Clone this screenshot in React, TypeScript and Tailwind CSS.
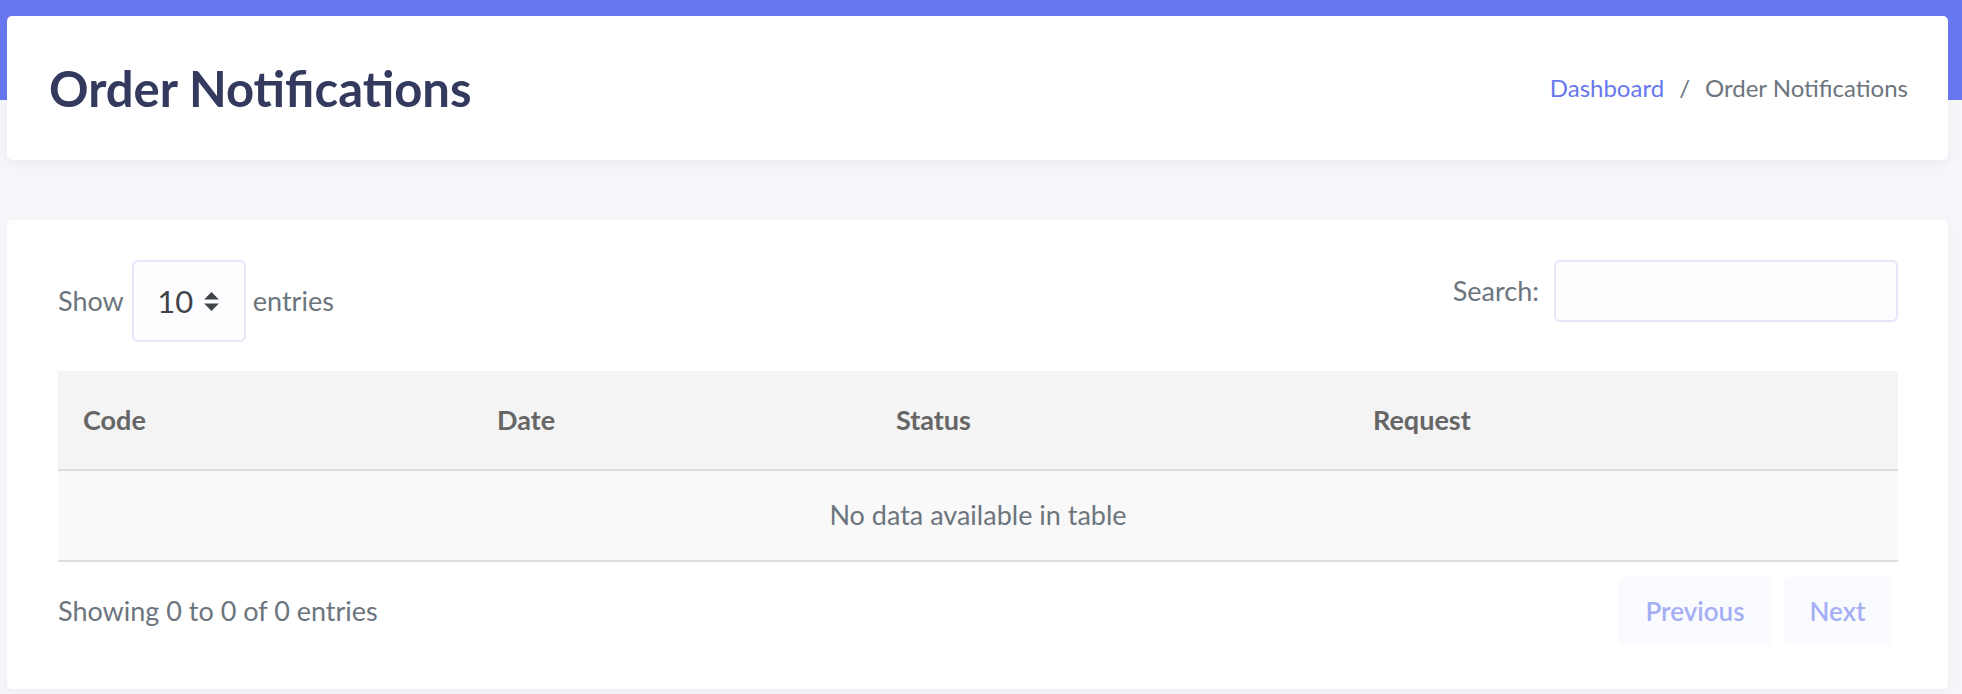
import React from 'react';

// Order notifications page — header card with breadcrumb, then an empty datatable.

const COLUMNS: { label: string; width: string }[] = [
  { label: 'Code', width: 'w-[414px]' },
  { label: 'Date', width: 'w-[399px]' },
  { label: 'Status', width: 'w-[477px]' },
  { label: 'Request', width: 'w-auto' },
];

const SortArrows: React.FC = () => (
  <svg width="17" height="21" viewBox="0 0 16 20" className="text-[#3f444a]" aria-hidden>
    <path d="M8 1 L15 8 H1 Z" fill="currentColor" />
    <path d="M1 12 H15 L8 19 Z" fill="currentColor" />
  </svg>
);

export default function App() {
  return (
    <div
      className="min-h-screen bg-[linear-gradient(#6777ef_0_100px,#f4f6f9_100px)] pt-[16px] pl-[7px] pr-[14px] pb-[4px] text-[#6c757d]"
      style={{ fontFamily: 'Lato, "Noto Sans", sans-serif' }}
    >
      {/* section header */}
      <div className="h-[144px] bg-white rounded-[5px] shadow-[0_4px_8px_rgba(0,0,0,0.04)] flex items-center justify-between pl-[42px] pr-[40px]">
        <h1 className="text-[49px] font-bold text-[#34395e] leading-none">Order Notifications</h1>
        <nav className="flex items-center text-[24px]">
          <a className="text-[#6777ef]">Dashboard</a>
          <span className="mx-[15px] text-[#6c757d]">/</span>
          <span className="text-[#6c757d]">Order Notifications</span>
        </nav>
      </div>

      {/* table card */}
      <div className="mt-[60px] bg-white rounded-[5px] shadow-[0_4px_8px_rgba(0,0,0,0.03)] pl-[51px] pr-[50px] pt-[40px] pb-[44px] text-[27px]">
        <div className="flex items-start justify-between">
          <div className="flex items-center">
            <span>Show</span>
            <div className="ml-[8px] mr-[7px] w-[114px] h-[82px] rounded-[6px] border-2 border-[#e4e6fc] bg-[#fdfdff] flex items-center justify-center gap-[10px]">
              <span className="text-[31px] text-[#3f444a]">10</span>
              <SortArrows />
            </div>
            <span>entries</span>
          </div>
          <div className="flex items-center">
            <span>Search:</span>
            <input className="ml-[15px] w-[344px] h-[62px] rounded-[6px] border-2 border-[#e4e6fc] bg-[#fdfdff] outline-none" />
          </div>
        </div>

        <table className="mt-[29px] w-full table-fixed border-collapse">
          <thead>
            <tr className="bg-[#f4f4f4] border-b-2 border-[#dddddd]">
              {COLUMNS.map((c) => (
                <th key={c.label} className={`${c.width} h-[99px] pl-[25px] text-left font-bold text-[#666666]`}>
                  {c.label}
                </th>
              ))}
            </tr>
          </thead>
          <tbody>
            <tr className="bg-[#f9f9f9] border-b-2 border-[#dddddd]">
              <td colSpan={4} className="h-[91px] text-center">No data available in table</td>
            </tr>
          </tbody>
        </table>

        <div className="mt-[15px] flex items-center justify-between">
          <span>Showing 0 to 0 of 0 entries</span>
          <div className="flex items-center gap-[11px] mr-[6px] text-[26px] font-semibold text-[#a5aef5]">
            <button className="w-[154px] h-[68px] rounded-[6px] bg-[#fafbfe]">Previous</button>
            <button className="w-[109px] h-[68px] rounded-[6px] bg-[#fafbfe]">Next</button>
          </div>
        </div>
      </div>
    </div>
  );
}
